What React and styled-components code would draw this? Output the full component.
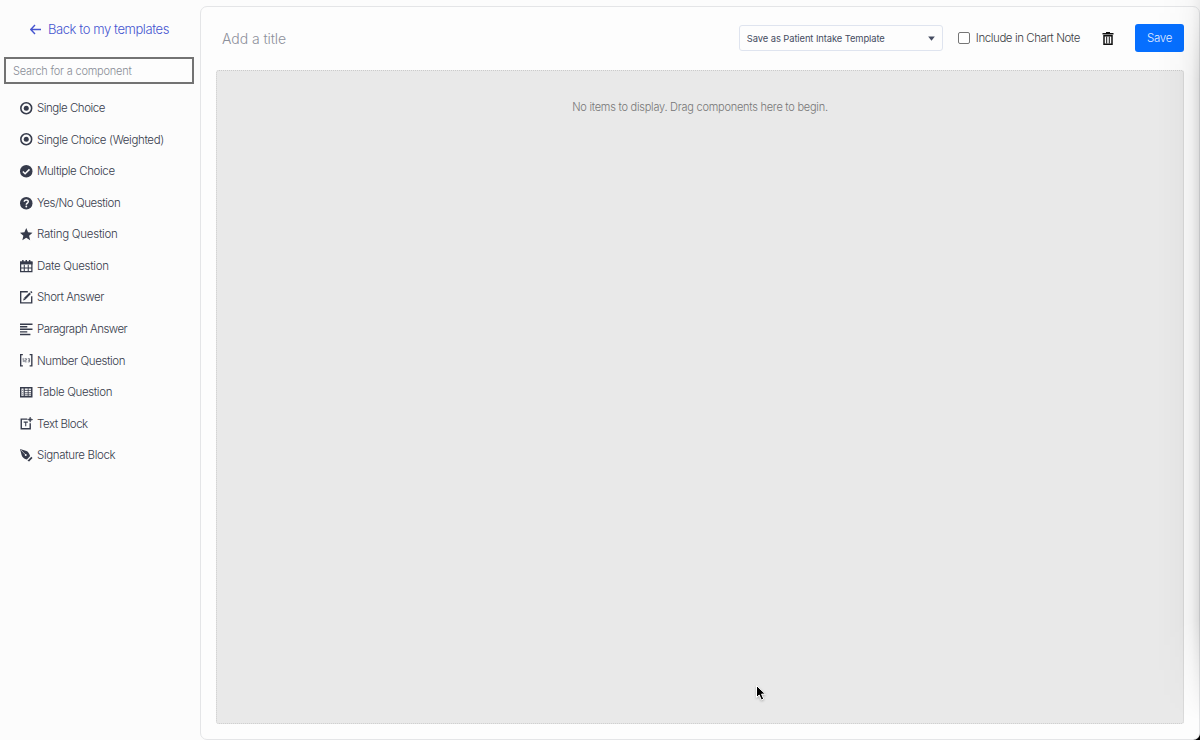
import React, { useState } from "react";
import styled, { createGlobalStyle } from "styled-components";

const GlobalStyle = createGlobalStyle`
  * {
    box-sizing: border-box;
  }
  body {
    margin: 0;
    background: #fcfcfc;
    overflow: hidden;
    font-family: Inter, "Liberation Sans", sans-serif;
  }
  button,
  input {
    font-family: inherit;
  }
`;

const RadioIcon = () => (
  <svg viewBox="0 0 24 24" fill="none" stroke="currentColor">
    <circle cx="12" cy="12" r="10.4" strokeWidth="3" />
    <circle cx="12" cy="12" r="4.8" fill="currentColor" stroke="none" />
  </svg>
);

const components = [
  { title: "Single Choice", spacing: -0.47, icon: <RadioIcon /> },
  { title: "Single Choice (Weighted)", spacing: -0.37, icon: <RadioIcon /> },
  {
    title: "Multiple Choice",
    spacing: -0.38,
    icon: (
      <svg viewBox="0 0 24 24">
        <circle cx="12" cy="12" r="12" fill="currentColor" />
        <path
          d="M5.5 12.5l4.3 4.2 8.4-8.4"
          fill="none"
          stroke="#fcfcfc"
          strokeWidth="3"
        />
      </svg>
    ),
  },
  {
    title: "Yes/No Question",
    spacing: -0.45,
    icon: (
      <svg viewBox="0 0 24 24">
        <circle cx="12" cy="12" r="12" fill="currentColor" />
        <path
          d="M8.2 9.2C8.2 4.2 16 4.6 15.8 9c-.1 2.8-3.7 2.8-3.7 6"
          fill="none"
          stroke="#fcfcfc"
          strokeWidth="2.9"
        />
        <circle cx="12.1" cy="18.3" r="1.8" fill="#fcfcfc" />
      </svg>
    ),
  },
  {
    title: "Rating Question",
    spacing: -0.25,
    icon: (
      <svg viewBox="0 0 24 24" fill="currentColor">
        <path d="M12 0l3.5 8.3 8.5.7-6.5 5.7 2 8.8-7.5-4.7-7.5 4.7 2-8.8L0 9l8.5-.7z" />
      </svg>
    ),
  },
  {
    title: "Date Question",
    spacing: -0.3,
    icon: (
      <svg viewBox="0 0 24 24" fill="none" stroke="currentColor">
        <path d="M1.2 4h21.6v18.5H1.2z" strokeWidth="2.4" />
        <path d="M0 3h24v5.5H0z" fill="currentColor" stroke="none" />
        <path d="M5.5 0v5M12 0v5M18.5 0v5" strokeWidth="2.8" />
        <path d="M8.2 9v13M15.8 9v13M1 15.5h22" strokeWidth="2" />
      </svg>
    ),
  },
  {
    title: "Short Answer",
    spacing: -0.44,
    icon: (
      <svg viewBox="0 0 24 24" fill="none" stroke="currentColor">
        <path d="M15 1.5H1.3v21.2h21.2V10" strokeWidth="2.6" />
        <path d="M9 15L19.5 4.5" strokeWidth="4" />
        <path
          d="M7.4 13.5L6 18l4.6-1.3zM19.4 1.8l2-1.8 2.6 2.6-2 1.9z"
          fill="currentColor"
          stroke="none"
        />
      </svg>
    ),
  },
  {
    title: "Paragraph Answer",
    spacing: -0.53,
    icon: (
      <svg viewBox="0 0 24 24" stroke="currentColor" strokeWidth="2.8">
        <path d="M0 2.2h24M0 7.2h14M0 12.1h24M0 17h14M0 22h20" />
      </svg>
    ),
  },
  {
    title: "Number Question",
    spacing: -0.42,
    icon: (
      <svg viewBox="0 0 24 24" fill="none" stroke="currentColor">
        <path d="M5.5 1.3H1.3v21.4h4.2M18.5 1.3h4.2v21.4h-4.2" strokeWidth="2.6" />
        <path
          d="M5 9.3l1.3-.8v7M8.8 9h3.5v2.8H9.2v3.3h3.5M15 9h3.4v6.2H15M15.5 12h3"
          strokeWidth="1.2"
        />
      </svg>
    ),
  },
  {
    title: "Table Question",
    spacing: -0.36,
    icon: (
      <svg viewBox="0 0 24 24" fill="none" stroke="currentColor">
        <path d="M1.4 3.2h21.2v17.6H1.4z" strokeWidth="2.8" />
        <path d="M8 4v16" strokeWidth="2.4" />
        <path d="M15.7 4v16M8 8.4h15M8 13h15M8 17h15" strokeWidth="1.6" />
        <path d="M4 8.4h1.5M4 13h1.5M4 17h1.5" strokeWidth="1.5" />
      </svg>
    ),
  },
  {
    title: "Text Block",
    spacing: -0.45,
    icon: (
      <svg viewBox="0 0 24 24" fill="none" stroke="currentColor">
        <path d="M14 4H2.4v18.7h17.2V12" strokeWidth="2.7" />
        <path d="M7 9.8h8M11 9.8v8" strokeWidth="2" />
        <path
          d="M19.5 0l1.4 3.6 3.6 1.4-3.6 1.4-1.4 3.6-1.4-3.6L14.5 5l3.6-1.4z"
          fill="currentColor"
          strokeWidth="1"
        />
      </svg>
    ),
  },
  {
    title: "Signature Block",
    spacing: -0.35,
    icon: (
      <svg viewBox="0 0 24 24">
        <path
          d="M0 0L12.5 3.7c3.5 1.2 5.4 5.4 7 9.6l-6.2 6.9C8.2 19 4.5 16.5 3.2 12z"
          fill="currentColor"
        />
        <path d="M1.5 1.5l8.7 9.2" stroke="#fcfcfc" strokeWidth="1.1" />
        <circle cx="11" cy="11.5" r="1.9" fill="#fcfcfc" />
        <path d="M14.3 22.4l7.4-7.6 2.3 2.5-6.4 6.7z" fill="currentColor" />
      </svg>
    ),
  },
];

const Page = styled.div`
  display: flex;
  width: 1200px;
  height: 740px;
  position: relative;
  overflow: hidden;
  background: #fcfcfc;
`;

const Sidebar = styled.aside`
  width: 200px;
  flex: none;
  padding: 17px 6px 0 4px;
`;

const BackLink = styled.a`
  display: flex;
  align-items: center;
  gap: 7px;
  height: 24px;
  padding-left: 26px;
  color: #4655d0;
  font-size: 13px;
  font-weight: 300;
  letter-spacing: -0.41px;
  white-space: nowrap;
  svg {
    width: 11px;
    height: 11px;
    flex: none;
  }
`;

const SearchInput = styled.input`
  display: block;
  width: 190px;
  height: 27px;
  margin-top: 16px;
  padding: 0 7px;
  border: 2px solid #737373;
  border-radius: 0;
  outline: none;
  background: #fdfdfd;
  font-size: 11px;
  font-weight: 300;
  letter-spacing: -0.21px;
  &::placeholder {
    color: #8a8d97;
    opacity: 1;
  }
`;

const ComponentList = styled.ul`
  list-style: none;
  margin: 8px 0 0;
  padding: 0.3px 0 0 15.5px;
`;

const ComponentItem = styled.li`
  display: flex;
  align-items: center;
  gap: 5px;
  height: 31.57px;
  color: #363b4b;
  font-size: 11.5px;
  font-weight: 300;
  letter-spacing: ${(props) => props.$spacing}px;
  white-space: nowrap;
  svg {
    width: 12.5px;
    height: 12.5px;
    flex: none;
    overflow: visible;
  }
`;

const Panel = styled.main`
  flex: 1;
  display: flex;
  flex-direction: column;
  margin-top: 6px;
  padding: 16px 15px 15px;
  border: 1px solid #e4e5e7;
  border-radius: 7px;
  background: #fdfdfd;
`;

const Toolbar = styled.header`
  display: flex;
  align-items: center;
  height: 30px;
  flex: none;
`;

const TitleInput = styled.input`
  flex: 1;
  min-width: 0;
  border: 0;
  outline: none;
  padding: 0 6px;
  background: transparent;
  font-size: 14px;
  font-weight: 300;
  letter-spacing: -0.06px;
  &::placeholder {
    color: #8d909b;
    opacity: 1;
  }
`;

const TemplateSelect = styled.button`
  display: flex;
  align-items: center;
  justify-content: space-between;
  width: 204px;
  height: 26px;
  padding: 0 7px;
  border: 1px solid #dfe4ef;
  border-radius: 3px;
  background: #fdfdfd;
  color: #454c61;
  font-size: 9.4px;
  letter-spacing: -0.09px;
  white-space: nowrap;
  svg {
    width: 7px;
    height: 5px;
  }
`;

const CheckLabel = styled.label`
  display: flex;
  align-items: center;
  gap: 6px;
  margin-left: 15px;
  color: #3c3e44;
  font-size: 11.5px;
  font-weight: 300;
  letter-spacing: -0.43px;
  white-space: nowrap;
  input {
    appearance: none;
    width: 12px;
    height: 12px;
    margin: 0;
    border: 1px solid #767676;
    border-radius: 2px;
    background: #fff;
  }
  input:checked {
    background: #066fff;
  }
`;

const DeleteButton = styled.button`
  display: flex;
  width: 12px;
  height: 13px;
  margin: 0 21px 0 22px;
  padding: 0;
  border: 0;
  background: transparent;
  color: #111;
  svg {
    width: 12px;
    height: 13px;
  }
`;

const SaveButton = styled.button`
  width: 49px;
  height: 28px;
  padding: 0;
  border: 0;
  border-radius: 3px;
  background: #066fff;
  color: #e4edff;
  font-size: 11.5px;
  font-weight: 300;
  letter-spacing: -0.3px;
`;

const DropZone = styled.section`
  flex: 1;
  margin-top: 17px;
  padding-top: 28px;
  border: 1px dotted #cbcbcb;
  border-radius: 3px;
  background: #e9e9e9;
  color: #777;
  font-size: 11px;
  font-weight: 300;
  letter-spacing: -0.245px;
  line-height: 16px;
  text-align: center;
`;

const EdgeShade = styled.div`
  position: absolute;
  top: 0;
  right: 0;
  width: 44px;
  height: 100%;
  pointer-events: none;
  background: linear-gradient(
    to right,
    rgba(0, 0, 0, 0),
    rgba(0, 0, 0, 0.015) 50%,
    rgba(0, 0, 0, 0.05) 80%,
    rgba(0, 0, 0, 0.14)
  );
  mask-image: linear-gradient(
    to bottom,
    rgba(0, 0, 0, 0.4),
    #000 80px,
    #000 620px,
    transparent 720px
  );
`;

const Corner = styled.svg`
  position: absolute;
  right: 0;
  bottom: 0;
  width: 7px;
  height: 7px;
`;

const Pointer = styled.svg`
  position: absolute;
  left: 755px;
  top: 684px;
  width: 12px;
  height: 18px;
  filter: drop-shadow(0 1px 1px rgba(0, 0, 0, 0.25));
`;

const App = () => {
  const [included, setIncluded] = useState(false);
  return (
    <Page>
      <GlobalStyle />
      <Sidebar>
        <BackLink>
          <svg viewBox="0 0 22 22" fill="none" stroke="currentColor">
            <path d="M22 11H2M10 2l-8.5 9L10 20" strokeWidth="2.8" />
          </svg>
          <span>Back to my templates</span>
        </BackLink>
        <SearchInput placeholder="Search for a component" />
        <ComponentList>
          {components.map((item) => (
            <ComponentItem key={item.title} $spacing={item.spacing}>
              {item.icon}
              <span>{item.title}</span>
            </ComponentItem>
          ))}
        </ComponentList>
      </Sidebar>
      <Panel>
        <Toolbar>
          <TitleInput placeholder="Add a title" />
          <TemplateSelect>
            <span>Save as Patient Intake Template</span>
            <svg viewBox="0 0 7 5" fill="currentColor">
              <path d="M.2.5h6.6L3.5 4.7z" />
            </svg>
          </TemplateSelect>
          <CheckLabel>
            <input
              type="checkbox"
              checked={included}
              onChange={(e) => setIncluded(e.target.checked)}
            />
            <span>Include in Chart Note</span>
          </CheckLabel>
          <DeleteButton aria-label="Delete">
            <svg viewBox="0 0 12 13" fill="none" stroke="currentColor">
              <path d="M.5 1.8h11M4 .7h4" strokeWidth="1.4" />
              <path d="M2 3.7v8.5h8V3.7z" strokeWidth="1.5" />
              <path d="M4.7 4.5v7M7.3 4.5v7" strokeWidth="1" />
            </svg>
          </DeleteButton>
          <SaveButton>Save</SaveButton>
        </Toolbar>
        <DropZone>No items to display. Drag components here to begin.</DropZone>
      </Panel>
      <EdgeShade />
      <Corner viewBox="0 0 7 7">
        <path d="M7 0v7H0C4 7 7 4 7 0z" fill="#000" />
      </Corner>
      <Pointer viewBox="0 0 12 18">
        <path
          d="M1.5 1.5v12l2.7-2.5 2.1 5 2.4-1-2.1-4.9h3.8z"
          fill="#000"
          stroke="#fff"
          strokeWidth="1"
        />
      </Pointer>
    </Page>
  );
};

export default App;
